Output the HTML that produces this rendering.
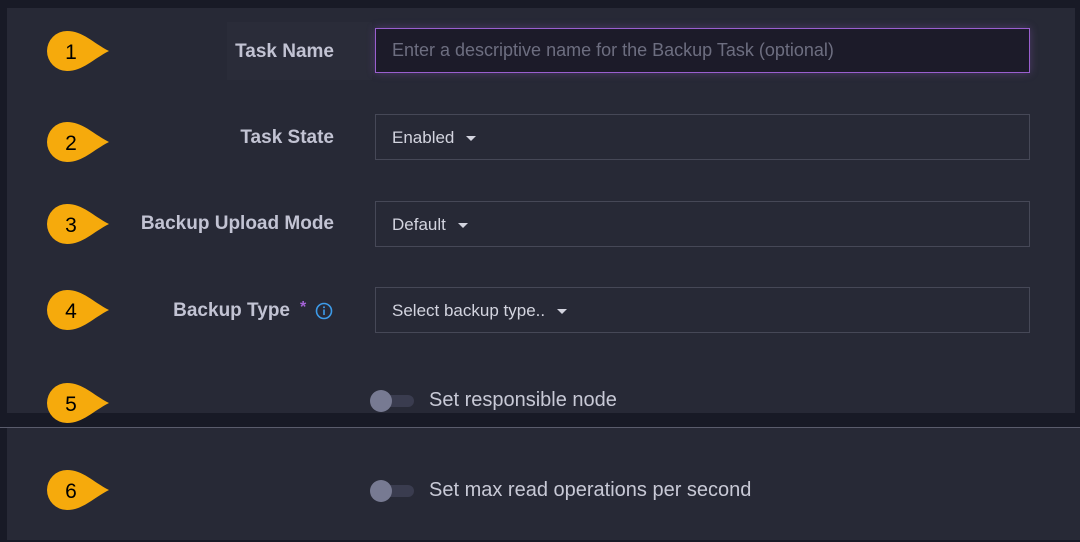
<!DOCTYPE html>
<html><head><style>
body{margin:0;width:1080px;height:542px;background:#181a26;position:relative;overflow:hidden;font-family:"Liberation Sans",sans-serif}
.p{position:absolute;background:#272936}
.lbl{position:absolute;right:746px;color:#c2c3d3;font-weight:bold;font-size:19px}
.in{position:absolute;left:375px;width:655px;height:44px;border:1px solid #464857;box-sizing:border-box;color:#d3d4df;font-size:17px;line-height:42px;padding-left:16px}
.car{display:inline-block;width:0;height:0;border-left:5px solid transparent;border-right:5px solid transparent;border-top:5px solid #d3d4df;margin-left:12px;vertical-align:middle}
.b{position:absolute;left:47px;width:62px;height:40px}
.b span{position:absolute;left:12px;top:10px;width:24px;text-align:center;font-size:21px;color:#000}
.tg{position:absolute;left:370px}
.tr{position:absolute;left:11px;top:-5px;width:33px;height:12px;border-radius:6px;background:#3a3c4f}
.kn{position:absolute;left:0;top:-10px;width:22px;height:22px;border-radius:50%;background:#777a92}
.tt{position:absolute;left:59px;top:-11px;white-space:nowrap;font-size:20px;color:#c8c9d6}
</style></head><body>
<div class="p" style="left:7px;top:8px;width:1068px;height:405px"></div>
<div style="position:absolute;left:0;top:427px;width:1080px;height:1px;background:#5a5c6c"></div>
<div class="p" style="left:7px;top:428px;width:1073px;height:112px"></div>
<div style="position:absolute;left:227px;top:22px;width:145px;height:58px;background:#2a2c39"></div>

<div class="lbl" style="top:41px">Task Name</div>
<div class="lbl" style="top:127px">Task State</div>
<div class="lbl" style="top:213px">Backup Upload Mode</div>
<div class="lbl" style="top:300px"><span style="margin-right:44px">Backup Type</span></div>
<span style="position:absolute;left:300px;top:299px;color:#a463d6;font-size:16px;font-weight:bold">*</span>
<svg style="position:absolute;left:315px;top:302px" width="18" height="18" viewBox="0 0 18 18"><circle cx="9" cy="9" r="7.5" fill="none" stroke="#3d9be9" stroke-width="1.6"/><rect x="8.2" y="7.5" width="1.6" height="5.5" fill="#3d9be9"/><circle cx="9" cy="5.2" r="1" fill="#3d9be9"/></svg>

<div class="in" style="top:28px;height:45px;border:1.5px solid #9a5fcf;background:#1c1b29;color:#6d6e80;font-size:18px;box-shadow:0 0 8px rgba(154,95,207,.35)">Enter a descriptive name for the Backup Task (optional)</div>
<div class="in" style="top:114px;height:46px;line-height:46px">Enabled<span class="car"></span></div>
<div class="in" style="top:201px;height:46px;line-height:46px">Default<span class="car"></span></div>
<div class="in" style="top:287px;height:46px;line-height:46px">Select backup type..<span class="car"></span></div>

<div class="tg" style="top:400px"><div class="tr"></div><div class="kn"></div><div class="tt">Set responsible node</div></div>
<div class="tg" style="top:490px"><div class="tr"></div><div class="kn"></div><div class="tt">Set max read operations per second</div></div>

<svg width="0" height="0" style="position:absolute"><defs><path id="d" d="M20 0C36 0 46 12 62 20C46 28 36 40 20 40A20 20 0 0 1 20 0Z" fill="#f6aa0c"/></defs></svg>
<div class="b" style="top:31px"><svg width="62" height="40"><use href="#d"/></svg><span>1</span></div>
<div class="b" style="top:122px"><svg width="62" height="40"><use href="#d"/></svg><span>2</span></div>
<div class="b" style="top:204px"><svg width="62" height="40"><use href="#d"/></svg><span>3</span></div>
<div class="b" style="top:290px"><svg width="62" height="40"><use href="#d"/></svg><span>4</span></div>
<div class="b" style="top:383px"><svg width="62" height="40"><use href="#d"/></svg><span>5</span></div>
<div class="b" style="top:470px"><svg width="62" height="40"><use href="#d"/></svg><span>6</span></div>
</body></html>
